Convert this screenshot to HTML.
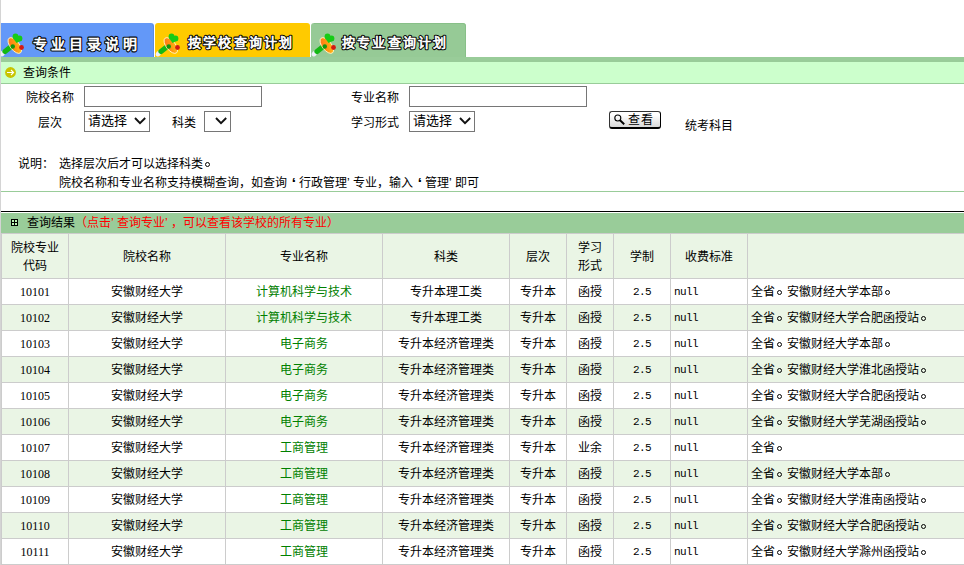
<!DOCTYPE html>
<html lang="zh-CN"><head><meta charset="utf-8">
<style>
*{box-sizing:border-box}
html,body{margin:0;padding:0;background:#fff;width:964px;height:565px;overflow:hidden;font-family:"Liberation Sans",sans-serif;font-size:12px;color:#000}
#lb{position:absolute;left:0;top:0;width:1px;height:565px;background:#d4d4d4;z-index:5}
.abs{position:absolute;white-space:nowrap}
.tab{position:absolute;top:23px;height:34px}
.tt{font-family:"Liberation Sans",sans-serif;font-size:13px;font-weight:500;fill:#000;stroke:#000;stroke-width:2.8px;stroke-linejoin:round}
.tw{font-family:"Liberation Sans",sans-serif;font-size:13px;font-weight:500;fill:#fff;stroke:#fff;stroke-width:0.7px}
#strip{position:absolute;left:1px;top:57px;width:963px;height:5px;background:#99cc99}
#qbar{position:absolute;left:1px;top:62px;width:963px;height:22px;background:#ccffcc;border-bottom:1px solid #99cc99}
.inp{position:absolute;border:1px solid #767676;background:#fff}
.sel{position:absolute;border:1px solid #767676;background:#fff;font-size:13px;line-height:14px;padding-left:3px;padding-top:2px}
.sel svg{position:absolute;right:2px;top:5px}
.lbl{position:absolute;white-space:nowrap;line-height:14px}
#gline{position:absolute;left:1px;top:191px;width:963px;height:1px;background:#99cc99}
#bline{position:absolute;left:1px;top:211px;width:963px;height:1px;background:#000}
#rbar{position:absolute;left:1px;top:213px;width:963px;height:20px;background:#99cc99}
table{position:absolute;left:1px;top:233px;border-collapse:collapse;table-layout:fixed;width:1006px}
td{border:1px solid #cccccc;padding:0;text-align:center;line-height:18px;white-space:nowrap;overflow:hidden}
tr{height:26px}
tr.h{height:45px;background:#eaf5e5}
tr.h td{padding-top:2px}
tr.g{background:#eaf5e5}
.num{font-family:"Liberation Mono",monospace;font-size:11px;letter-spacing:-0.6px}
.code{font-family:"Liberation Serif",serif;font-size:12px}
.grn{color:#008000}
td.l{text-align:left;padding-left:3px}
.lq{display:inline-block;width:12px;text-align:right;padding-right:3px;font-size:15px;line-height:14px;vertical-align:top;font-weight:bold}
.rq{display:inline-block;width:6px;text-align:left}
.pd{display:inline-block;width:12px;height:10px;position:relative}
.pd::after{content:"";box-sizing:border-box;position:absolute;left:2px;top:4px;width:5px;height:5px;border:1px solid #000;border-radius:50%}
#btn{position:absolute;left:609px;top:111px;width:52px;height:18px;border:1px solid #333;border-bottom:2px solid #000;border-right-color:#000;border-radius:3px;background:linear-gradient(#fff 20%,#d8d8d8)}
</style></head><body>
<div id="lb"></div>
<!-- tabs -->
<svg class="tab" style="left:1px" width="153" height="34"><path d="M0 0H150Q153 0 153 3V34H0Z" fill="#6398f8"/><path d="M151 1.5Q152.5 2 152.5 4V34" stroke="#5a8ce0" stroke-width="1" fill="none"/>
<g transform="translate(-2,-23)">
<defs><linearGradient id="bg1" x1="0" y1="0" x2="1" y2="1"><stop offset="0" stop-color="#ff6a1a"/><stop offset="0.55" stop-color="#ff9a10"/><stop offset="1" stop-color="#ffd020"/></linearGradient></defs>
<ellipse cx="3.5" cy="53.5" rx="2.4" ry="3.2" transform="rotate(40 3.5 53.5)" fill="#eeeef8"/>
<path d="M6 51.5L13.5 45.5" stroke="#14b814" stroke-width="5.2" stroke-linecap="round"/>
<ellipse cx="15.8" cy="45.5" rx="4.6" ry="9.3" transform="rotate(-38 15.8 45.5)" fill="url(#bg1)" stroke="#fff4c0" stroke-width="0.9"/>
<circle cx="13.8" cy="46.5" r="2.2" fill="#0e960e"/>
<circle cx="16.5" cy="36.5" r="2.9" fill="#16cc16"/><circle cx="20.5" cy="38.5" r="2.9" fill="#16cc16"/><path d="M14 38L23 40L17.5 43Z" fill="#16cc16"/>
<circle cx="22.5" cy="47.5" r="2.4" fill="#d41a14"/>
</g>
<text class="tt" x="32" y="25.5" letter-spacing="4" style="font-size:14px">专业目录说明</text><text class="tw" x="32" y="25.5" letter-spacing="4" style="font-size:14px">专业目录说明</text></svg>
<svg class="tab" style="left:155px" width="155" height="34"><path d="M3 0H152Q155 0 155 3V34H0V3Q0 0 3 0Z" fill="#ffca00"/><g transform="translate(0,-23)">

<ellipse cx="3.5" cy="53.5" rx="2.4" ry="3.2" transform="rotate(40 3.5 53.5)" fill="#eeeef8"/>
<path d="M6 51.5L13.5 45.5" stroke="#14b814" stroke-width="5.2" stroke-linecap="round"/>
<ellipse cx="15.8" cy="45.5" rx="4.6" ry="9.3" transform="rotate(-38 15.8 45.5)" fill="url(#bg1)" stroke="#fff4c0" stroke-width="0.9"/>
<circle cx="13.8" cy="46.5" r="2.2" fill="#0e960e"/>
<circle cx="16.5" cy="36.5" r="2.9" fill="#16cc16"/><circle cx="20.5" cy="38.5" r="2.9" fill="#16cc16"/><path d="M14 38L23 40L17.5 43Z" fill="#16cc16"/>
<circle cx="22.5" cy="47.5" r="2.4" fill="#d41a14"/>
</g>
<text class="tt" x="33" y="24" letter-spacing="2.2">按学校查询计划</text><text class="tw" x="33" y="24" letter-spacing="2.2">按学校查询计划</text></svg>
<svg class="tab" style="left:311px" width="155" height="34"><path d="M3 0H152Q155 0 155 3V34H0V3Q0 0 3 0Z" fill="#96ca96"/><path d="M3 0.5H152Q154.5 0.5 154.5 3V34" stroke="#88c088" stroke-width="1" fill="none"/><g transform="translate(0,-23)">

<ellipse cx="3.5" cy="53.5" rx="2.4" ry="3.2" transform="rotate(40 3.5 53.5)" fill="#eeeef8"/>
<path d="M6 51.5L13.5 45.5" stroke="#14b814" stroke-width="5.2" stroke-linecap="round"/>
<ellipse cx="15.8" cy="45.5" rx="4.6" ry="9.3" transform="rotate(-38 15.8 45.5)" fill="url(#bg1)" stroke="#fff4c0" stroke-width="0.9"/>
<circle cx="13.8" cy="46.5" r="2.2" fill="#0e960e"/>
<circle cx="16.5" cy="36.5" r="2.9" fill="#16cc16"/><circle cx="20.5" cy="38.5" r="2.9" fill="#16cc16"/><path d="M14 38L23 40L17.5 43Z" fill="#16cc16"/>
<circle cx="22.5" cy="47.5" r="2.4" fill="#d41a14"/>
</g>
<text class="tt" x="31" y="24" letter-spacing="2.2">按专业查询计划</text><text class="tw" x="31" y="24" letter-spacing="2.2">按专业查询计划</text></svg>
<div id="strip"></div>
<div id="qbar"></div>
<div class="lbl" style="left:23px;top:66px">查询条件</div>
<svg class="abs" style="left:5px;top:67px" width="12" height="12"><circle cx="5.5" cy="5.5" r="5.4" fill="#c8c400"/><path d="M2 5.5H8.6M6 3L8.6 5.5L6 8" stroke="#fff" stroke-width="1.1" fill="none"/></svg>
<div class="lbl" style="left:26px;top:91px">院校名称</div>
<div class="inp" style="left:84px;top:86px;width:178px;height:21px"></div>
<div class="lbl" style="left:351px;top:91px">专业名称</div>
<div class="inp" style="left:409px;top:86px;width:178px;height:21px"></div>
<div class="lbl" style="left:38px;top:116px">层次</div>
<div class="sel" style="left:84px;top:111px;width:66px;height:21px">请选择<svg width="13" height="9"><path d="M1 1L6 6.2L11.2 1" stroke="#111" stroke-width="1.9" fill="none"/></svg></div>
<div class="lbl" style="left:172px;top:116px">科类</div>
<div class="sel" style="left:204px;top:111px;width:27px;height:21px"><svg width="13" height="9"><path d="M1 1L6 6.2L11.2 1" stroke="#111" stroke-width="1.9" fill="none"/></svg></div>
<div class="lbl" style="left:351px;top:116px">学习形式</div>
<div class="sel" style="left:409px;top:111px;width:66px;height:21px">请选择<svg width="13" height="9"><path d="M1 1L6 6.2L11.2 1" stroke="#111" stroke-width="1.9" fill="none"/></svg></div>
<div id="btn"><svg class="abs" style="left:4px;top:2px" width="13" height="13"><circle cx="3.8" cy="4" r="3" stroke="#000" stroke-width="1.1" fill="none"/><path d="M6 6.2L10.2 10.3" stroke="#000" stroke-width="1.9"/></svg><div class="lbl" style="left:18px;top:1px;letter-spacing:1px">查看</div></div>
<div class="lbl" style="left:685px;top:119px">统考科目</div>
<div class="lbl" style="left:18px;top:157px">说明：</div>
<div class="lbl" style="left:59px;top:157px">选择层次后才可以选择科类<span class="pd"></span></div>
<div class="lbl" style="left:59px;top:176px">院校名称和专业名称支持模糊查询，如查询<span class="lq">‘</span>行政管理<span class="rq">’</span>专业，输入<span class="lq">‘</span>管理<span class="rq">’</span>即可</div>
<div id="gline"></div>
<div id="bline"></div>
<div id="rbar"></div>
<svg class="abs" style="left:11px;top:219px" width="7" height="7" shape-rendering="crispEdges"><rect x="0" y="0" width="7" height="7" fill="#000"/><rect x="1" y="1" width="2" height="2" fill="#c0f8b8"/><rect x="4" y="1" width="2" height="2" fill="#c0f8b8"/><rect x="1" y="4" width="2" height="2" fill="#c0f8b8"/><rect x="4" y="4" width="2" height="2" fill="#c0f8b8"/></svg>
<div class="lbl" style="left:27px;top:216px">查询结果<span style="color:#ff0000">（点击<span class="rq">’</span>查询专业<span class="rq">’</span>，可以查看该学校的所有专业）</span></div>
<table>
<colgroup><col style="width:67px"><col style="width:157px"><col style="width:157px"><col style="width:127px"><col style="width:57px"><col style="width:47px"><col style="width:57px"><col style="width:77px"><col style="width:260px"></colgroup>
<tr class="h"><td>院校专业<br>代码</td><td>院校名称</td><td>专业名称</td><td>科类</td><td>层次</td><td>学习<br>形式</td><td>学制</td><td>收费标准</td><td></td></tr>
<tr><td class="code">10101</td><td>安徽财经大学</td><td class="grn">计算机科学与技术</td><td>专升本理工类</td><td>专升本</td><td>函授</td><td class="num">2.5</td><td class="num l">null</td><td class="l">全省<span class="pd"></span>安徽财经大学本部<span class="pd"></span></td></tr>
<tr class="g"><td class="code">10102</td><td>安徽财经大学</td><td class="grn">计算机科学与技术</td><td>专升本理工类</td><td>专升本</td><td>函授</td><td class="num">2.5</td><td class="num l">null</td><td class="l">全省<span class="pd"></span>安徽财经大学合肥函授站<span class="pd"></span></td></tr>
<tr><td class="code">10103</td><td>安徽财经大学</td><td class="grn">电子商务</td><td>专升本经济管理类</td><td>专升本</td><td>函授</td><td class="num">2.5</td><td class="num l">null</td><td class="l">全省<span class="pd"></span>安徽财经大学本部<span class="pd"></span></td></tr>
<tr class="g"><td class="code">10104</td><td>安徽财经大学</td><td class="grn">电子商务</td><td>专升本经济管理类</td><td>专升本</td><td>函授</td><td class="num">2.5</td><td class="num l">null</td><td class="l">全省<span class="pd"></span>安徽财经大学淮北函授站<span class="pd"></span></td></tr>
<tr><td class="code">10105</td><td>安徽财经大学</td><td class="grn">电子商务</td><td>专升本经济管理类</td><td>专升本</td><td>函授</td><td class="num">2.5</td><td class="num l">null</td><td class="l">全省<span class="pd"></span>安徽财经大学合肥函授站<span class="pd"></span></td></tr>
<tr class="g"><td class="code">10106</td><td>安徽财经大学</td><td class="grn">电子商务</td><td>专升本经济管理类</td><td>专升本</td><td>函授</td><td class="num">2.5</td><td class="num l">null</td><td class="l">全省<span class="pd"></span>安徽财经大学芜湖函授站<span class="pd"></span></td></tr>
<tr><td class="code">10107</td><td>安徽财经大学</td><td class="grn">工商管理</td><td>专升本经济管理类</td><td>专升本</td><td>业余</td><td class="num">2.5</td><td class="num l">null</td><td class="l">全省<span class="pd"></span></td></tr>
<tr class="g"><td class="code">10108</td><td>安徽财经大学</td><td class="grn">工商管理</td><td>专升本经济管理类</td><td>专升本</td><td>函授</td><td class="num">2.5</td><td class="num l">null</td><td class="l">全省<span class="pd"></span>安徽财经大学本部<span class="pd"></span></td></tr>
<tr><td class="code">10109</td><td>安徽财经大学</td><td class="grn">工商管理</td><td>专升本经济管理类</td><td>专升本</td><td>函授</td><td class="num">2.5</td><td class="num l">null</td><td class="l">全省<span class="pd"></span>安徽财经大学淮南函授站<span class="pd"></span></td></tr>
<tr class="g"><td class="code">10110</td><td>安徽财经大学</td><td class="grn">工商管理</td><td>专升本经济管理类</td><td>专升本</td><td>函授</td><td class="num">2.5</td><td class="num l">null</td><td class="l">全省<span class="pd"></span>安徽财经大学合肥函授站<span class="pd"></span></td></tr>
<tr><td class="code">10111</td><td>安徽财经大学</td><td class="grn">工商管理</td><td>专升本经济管理类</td><td>专升本</td><td>函授</td><td class="num">2.5</td><td class="num l">null</td><td class="l">全省<span class="pd"></span>安徽财经大学滁州函授站<span class="pd"></span></td></tr>
</table>
</body></html>
